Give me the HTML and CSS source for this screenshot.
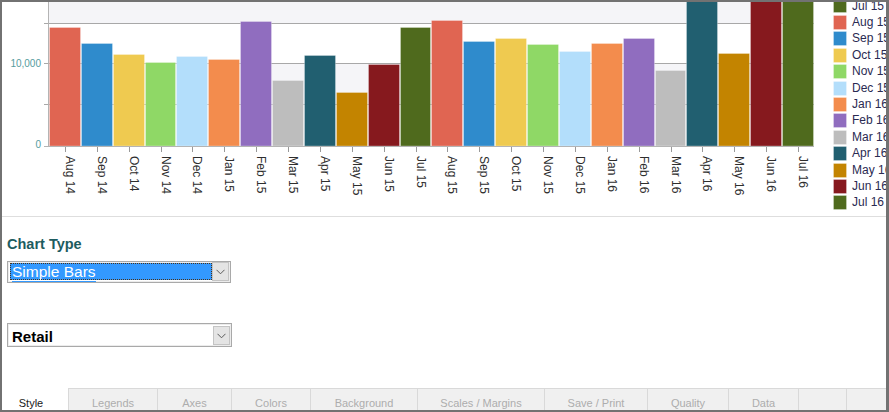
FILE: index.html
```html
<!DOCTYPE html>
<html lang="en">
<head>
<meta charset="utf-8">
<title>Monthly Sales – Chart Editor</title>
<link rel="stylesheet" href="styles.css">
</head>
<body>
<div class="frame">
  <div class="chart">
    <svg class="chart-svg" width="884" height="214" viewBox="2 2 884 214" xmlns="http://www.w3.org/2000/svg">
      <!-- plot background bands -->
      <rect class="band" x="49" y="0" width="765" height="23"/>
      <rect class="band" x="49" y="64" width="765" height="40"/>
      <!-- grid lines with their left ticks -->
      <path class="grid" d="M44 23.5H814M44 63.5H814M44 104.5H814"/>

      <!-- bars -->
      <g class="bars">
        <rect class="c-aug" x="49.5" y="27.5" width="31" height="118.5"/>
        <rect class="c-sep" x="81.5" y="43.5" width="31" height="102.5"/>
        <rect class="c-oct" x="113.5" y="54.5" width="31" height="91.5"/>
        <rect class="c-nov" x="145.5" y="62.5" width="30" height="83.5"/>
        <rect class="c-dec" x="176.5" y="56.5" width="31" height="89.5"/>
        <rect class="c-jan" x="208.5" y="59.5" width="31" height="86.5"/>
        <rect class="c-feb" x="240.5" y="21.5" width="31" height="124.5"/>
        <rect class="c-mar" x="272.5" y="80.5" width="31" height="65.5"/>
        <rect class="c-apr" x="304.5" y="55.5" width="31" height="90.5"/>
        <rect class="c-may" x="336.5" y="92.5" width="31" height="53.5"/>
        <rect class="c-jun" x="368.5" y="64.5" width="31" height="81.5"/>
        <rect class="c-jul" x="400.5" y="27.5" width="30" height="118.5"/>
        <rect class="c-aug" x="431.5" y="20.5" width="31" height="125.5"/>
        <rect class="c-sep" x="463.5" y="41.5" width="31" height="104.5"/>
        <rect class="c-oct" x="495.5" y="38.5" width="31" height="107.5"/>
        <rect class="c-nov" x="527.5" y="44.5" width="31" height="101.5"/>
        <rect class="c-dec" x="559.5" y="51.5" width="31" height="94.5"/>
        <rect class="c-jan" x="591.5" y="43.5" width="31" height="102.5"/>
        <rect class="c-feb" x="623.5" y="38.5" width="31" height="107.5"/>
        <rect class="c-mar" x="655.5" y="70.5" width="30" height="75.5"/>
        <rect class="c-apr" x="686.5" y="-5" width="31" height="151"/>
        <rect class="c-may" x="718.5" y="53.5" width="31" height="92.5"/>
        <rect class="c-jun" x="750.5" y="-5" width="31" height="151"/>
        <rect class="c-jul" x="782.5" y="-5" width="31" height="151"/>
      </g>

      <!-- axes -->
      <path class="axis" d="M48.5 0V146M44 146.5H814"/>
      <path class="tick" d="M65.5 147V152M97.5 147V152M129.5 147V152M161.5 147V152M192.5 147V152M224.5 147V152M256.5 147V152M288.5 147V152M320.5 147V152M352.5 147V152M384.5 147V152M416.5 147V152M447.5 147V152M479.5 147V152M511.5 147V152M543.5 147V152M575.5 147V152M607.5 147V152M639.5 147V152M671.5 147V152M702.5 147V152M734.5 147V152M766.5 147V152M798.5 147V152"/>

      <text class="ylabel" x="41" y="66.5">10,000</text>
      <text class="ylabel" x="41" y="148">0</text>

      <g class="xlabels">
        <text transform="translate(66 156) rotate(90)">Aug 14</text>
        <text transform="translate(98 156) rotate(90)">Sep 14</text>
        <text transform="translate(130 156) rotate(90)">Oct 14</text>
        <text transform="translate(162 156) rotate(90)">Nov 14</text>
        <text transform="translate(193 156) rotate(90)">Dec 14</text>
        <text transform="translate(225 156) rotate(90)">Jan 15</text>
        <text transform="translate(257 156) rotate(90)">Feb 15</text>
        <text transform="translate(289 156) rotate(90)">Mar 15</text>
        <text transform="translate(321 156) rotate(90)">Apr 15</text>
        <text transform="translate(353 156) rotate(90)">May 15</text>
        <text transform="translate(385 156) rotate(90)">Jun 15</text>
        <text transform="translate(417 156) rotate(90)">Jul 15</text>
        <text transform="translate(448 156) rotate(90)">Aug 15</text>
        <text transform="translate(480 156) rotate(90)">Sep 15</text>
        <text transform="translate(512 156) rotate(90)">Oct 15</text>
        <text transform="translate(544 156) rotate(90)">Nov 15</text>
        <text transform="translate(576 156) rotate(90)">Dec 15</text>
        <text transform="translate(608 156) rotate(90)">Jan 16</text>
        <text transform="translate(640 156) rotate(90)">Feb 16</text>
        <text transform="translate(672 156) rotate(90)">Mar 16</text>
        <text transform="translate(703 156) rotate(90)">Apr 16</text>
        <text transform="translate(735 156) rotate(90)">May 16</text>
        <text transform="translate(767 156) rotate(90)">Jun 16</text>
        <text transform="translate(799 156) rotate(90)">Jul 16</text>
      </g>

      <!-- legend (scrolled list) -->
      <g class="legend">
        <rect class="c-jul" x="833.5" y="-1.5" width="13" height="14"/>
        <rect class="c-aug" x="833.5" y="15.5" width="13" height="14"/>
        <rect class="c-sep" x="833.5" y="31.5" width="13" height="14"/>
        <rect class="c-oct" x="833.5" y="48.5" width="13" height="14"/>
        <rect class="c-nov" x="833.5" y="64.5" width="13" height="14"/>
        <rect class="c-dec" x="833.5" y="81.5" width="13" height="14"/>
        <rect class="c-jan" x="833.5" y="97.5" width="13" height="14"/>
        <rect class="c-feb" x="833.5" y="113.5" width="13" height="14"/>
        <rect class="c-mar" x="833.5" y="130.5" width="13" height="14"/>
        <rect class="c-apr" x="833.5" y="146.5" width="13" height="14"/>
        <rect class="c-may" x="833.5" y="163.5" width="13" height="14"/>
        <rect class="c-jun" x="833.5" y="179.5" width="13" height="14"/>
        <rect class="c-jul" x="833.5" y="195.5" width="13" height="14"/>
      </g>
      <g class="legend-text">
        <text x="852" y="10">Jul 15</text>
        <text x="852" y="26">Aug 15</text>
        <text x="852" y="42">Sep 15</text>
        <text x="852" y="59">Oct 15</text>
        <text x="852" y="75">Nov 15</text>
        <text x="852" y="92">Dec 15</text>
        <text x="852" y="108">Jan 16</text>
        <text x="852" y="124">Feb 16</text>
        <text x="852" y="141">Mar 16</text>
        <text x="852" y="157">Apr 16</text>
        <text x="852" y="174">May 16</text>
        <text x="852" y="190">Jun 16</text>
        <text x="852" y="206">Jul 16</text>
      </g>
    </svg>
  </div>

  <div class="controls">
    <div class="field-label">Chart Type</div>
    <div class="combo combo-type">
      <span class="combo-value"><span class="combo-text">Simple Bars</span></span>
      <span class="combo-btn">
        <svg width="9" height="6" viewBox="0 0 9 6"><path d="M0.5 0.8L4.5 4.8L8.5 0.8" fill="none" stroke="#5a5a5a" stroke-width="1"/></svg>
      </span>
    </div>
    <div class="combo combo-data">
      <span class="combo-value">Retail</span>
      <span class="combo-btn">
        <svg width="9" height="6" viewBox="0 0 9 6"><path d="M0.5 0.8L4.5 4.8L8.5 0.8" fill="none" stroke="#5a5a5a" stroke-width="1"/></svg>
      </span>
    </div>
  </div>

  <div class="tabs">
    <div class="tab tab-active tab-style">Style</div>
    <div class="tab tab-legends">Legends</div>
    <div class="tab tab-axes">Axes</div>
    <div class="tab tab-colors">Colors</div>
    <div class="tab tab-background">Background</div>
    <div class="tab tab-scales">Scales / Margins</div>
    <div class="tab tab-save">Save / Print</div>
    <div class="tab tab-quality">Quality</div>
    <div class="tab tab-data">Data</div>
    <div class="tab tab-blank1"></div>
    <div class="tab tab-blank2"></div>
  </div>
</div>
</body>
</html>
```
FILE: styles.css
```css
html, body {
  margin: 0;
  padding: 0;
  background: #fff;
}

body {
  font-family: "Liberation Sans", Arial, sans-serif;
}

.frame {
  width: 889px;
  height: 412px;
  box-sizing: border-box;
  border: 2px solid #727272;
  border-right-width: 3px;
  display: flex;
  flex-direction: column;
  overflow: hidden;
  background: #fff;
}

/* ---------- chart ---------- */
.chart {
  flex: none;
  height: 214px;
  border-bottom: 1px solid #dedede;
}

.chart-svg {
  display: block;
}

.band { fill: #f5f5f8; }
.grid { stroke: #a8a8a8; stroke-width: 1; fill: none; }
.axis { stroke: #b4b4b4; stroke-width: 1; fill: none; }
.tick { stroke: #999; stroke-width: 1; fill: none; }

.bars rect,
.legend rect {
  stroke: rgba(255, 255, 255, 0.28);
  stroke-width: 1;
}

.c-aug { fill: #e06552; }
.c-sep { fill: #2f8bcc; }
.c-oct { fill: #efca50; }
.c-nov { fill: #8fd866; }
.c-dec { fill: #b3defb; }
.c-jan { fill: #f38c4d; }
.c-feb { fill: #906dbf; }
.c-mar { fill: #bdbdbd; }
.c-apr { fill: #215f70; }
.c-may { fill: #c38400; }
.c-jun { fill: #86191e; }
.c-jul { fill: #4f6a1d; }

.ylabel {
  font: 10px "Liberation Sans", Arial, sans-serif;
  fill: #569c9e;
  text-anchor: end;
}

.xlabels text {
  font: 12px "Liberation Sans", Arial, sans-serif;
  fill: #2e2e2e;
}

.legend-text text {
  font: 12px "Liberation Sans", Arial, sans-serif;
  fill: #2a2a52;
}

/* ---------- controls ---------- */
.controls {
  flex: none;
  padding: 19px 0 0 5px;
}

.field-label {
  font: bold 14.5px/17px "Liberation Sans", Arial, sans-serif;
  color: #1d5c5f;
  margin: 0 0 8px;
}

.combo {
  box-sizing: border-box;
  display: flex;
  align-items: flex-start;
  border: 1px solid #a9a9a9;
  box-shadow: inset 0 0 0 1px #ececec;
  background: #fff;
}

.combo-btn {
  box-sizing: border-box;
  width: 17px;
  height: 19px;
  margin-left: auto;
  margin-right: 1px;
  background: #e4e4e4;
  border: 1px solid #c4c4c4;
  display: flex;
  align-items: center;
  justify-content: center;
}

.combo-btn svg {
  display: block;
}

.combo-type {
  width: 224px;
  height: 22px;
}

.combo-type .combo-value {
  box-sizing: border-box;
  width: 202px;
  height: 17px;
  margin: 1px 0 0 2px;
  padding-left: 2px;
  background: #3399ff;
  outline: 1px dotted #4a3218;
  outline-offset: -1px;
  font: 15.5px/18px "Liberation Sans", Arial, sans-serif;
  color: #fff;
  white-space: nowrap;
}

.combo-type .combo-text {
  display: inline-block;
  border-bottom: 1px solid #3399ff;
}

.combo-data {
  width: 225px;
  height: 24px;
  margin-top: 40px;
}

.combo-data .combo-value {
  padding: 2px 0 0 4px;
  font: bold 15px/21px "Liberation Sans", Arial, sans-serif;
  color: #000;
}

.combo-data .combo-btn {
  margin-top: 2px;
}

/* ---------- tabs ---------- */
.tabs {
  flex: none;
  margin-top: auto;
  display: flex;
  height: 22px;
}

.tab {
  flex: none;
  box-sizing: border-box;
  height: 22px;
  padding-top: 7px;
  font: 11px/14px "Liberation Sans", Arial, sans-serif;
  color: #adadad;
  text-align: center;
  white-space: nowrap;
  background: #f0f0f0;
  border-top: 1px solid #d9d9d9;
  border-left: 1px solid #d9d9d9;
}

.tab-active {
  background: #fff;
  border-color: transparent;
  border-left: none;
  color: #1a1a1a;
  padding-right: 8px;
}

.tab-style { width: 66px; }
.tab-legends { width: 89px; }
.tab-axes { width: 74px; }
.tab-colors { width: 79px; }
.tab-background { width: 107px; }
.tab-scales { width: 127px; }
.tab-save { width: 103px; }
.tab-quality { width: 81px; }
.tab-data { width: 70px; }
.tab-blank1 { width: 48px; }
.tab-blank2 { width: 40px; }
```
